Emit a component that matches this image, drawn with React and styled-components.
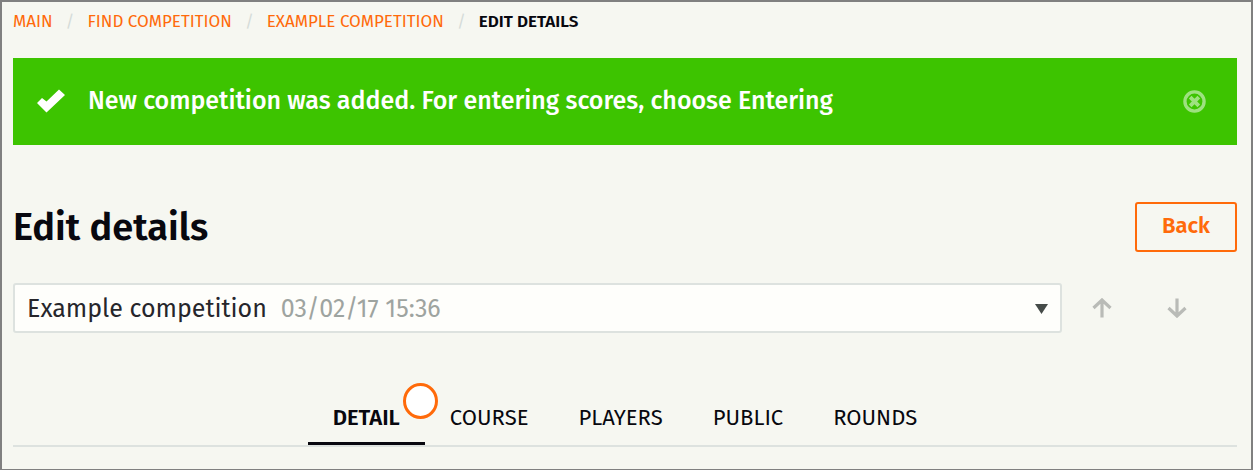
import { useState } from "react";
import styled, { createGlobalStyle, css } from "styled-components";

const GlobalStyles = createGlobalStyle`
  *,
  *::before,
  *::after {
    box-sizing: border-box;
    margin: 0;
    padding: 0;
  }

  body {
    background-color: #f6f7f1;
    color: #08080f;
    font-family: "Fira Sans", "Noto Sans", sans-serif;
  }

  button,
  select {
    font: inherit;
    color: inherit;
    background: none;
    border: none;
    cursor: pointer;
  }
`;

const Page = styled.main`
  min-height: 100vh;
  padding: 8px 14px 22px 11px;
  border: 2px solid #808080;
`;

const Breadcrumbs = styled.ol`
  display: flex;
  list-style: none;
  font-size: 17px;
  line-height: 24px;
  text-transform: uppercase;
`;

const Crumb = styled.li`
  &:not(:last-child)::after {
    content: "/";
    margin: 0 13px;
    color: #d5dcd9;
  }

  a {
    color: #ff6a0a;
    text-decoration: none;
  }

  span {
    font-weight: 600;
  }
`;

const Alert = styled.div`
  display: flex;
  align-items: center;
  margin-top: 24px;
  padding: 27px 31px 28px 24px;
  background-color: #3dc400;
  color: #fff;
`;

const AlertText = styled.p`
  flex: 1;
  margin-left: 23px;
  font-size: 25px;
  font-weight: 500;
  line-height: 32px;
`;

const CloseButton = styled.button`
  display: flex;
  opacity: 0.5;
`;

const Header = styled.header`
  display: flex;
  align-items: center;
  justify-content: space-between;
  margin-top: 57px;
`;

const Title = styled.h1`
  font-size: 38px;
  font-weight: 600;
  line-height: 50px;
`;

const BackButton = styled.button`
  height: 50px;
  padding: 0 25px 4px;
  border: 2px solid #ff6a0a;
  border-radius: 3px;
  color: #ff6a0a;
  font-size: 22px;
  font-weight: 600;
`;

const Picker = styled.div`
  display: flex;
  align-items: center;
  margin-top: 31px;
`;

const Field = styled.label`
  display: flex;
  flex: 1;
  align-items: center;
  height: 50px;
  padding: 2px 12px 0;
  border: 2px solid #dde2df;
  border-radius: 3px;
  background-color: #fefefb;
  color: #26262b;
  font-size: 25px;
`;

const Select = styled.select`
  appearance: none;
  field-sizing: content;
  outline: none;
`;

const PlayedAt = styled.span`
  flex: 1;
  margin-left: 14px;
  color: #9ea4a0;
`;

const StepButton = styled.button`
  display: flex;
  justify-content: center;
  width: 24px;
  margin-left: 28px;
  color: #b9bbb7;

  & + & {
    margin: 0 48px 0 51px;
  }
`;

const Tabs = styled.nav`
  display: flex;
  justify-content: center;
  margin-top: 58px;
  border-bottom: 2px solid #dde2df;
`;

const Tab = styled.button`
  position: relative;
  height: 54px;
  padding: 1px 25px 0;
  border-bottom: 3px solid transparent;
  font-size: 22px;
  text-transform: uppercase;

  ${(props) =>
    props.$active &&
    css`
      border-color: #08080f;
      font-weight: 600;
    `}
`;

const Marker = styled.i`
  position: absolute;
  top: -8px;
  right: -13px;
  width: 35px;
  height: 36px;
  border: 3px solid #ff6a0a;
  border-radius: 50%;
  background-color: #fff;
`;

const tabs = ["Detail", "Course", "Players", "Public", "Rounds"];

function CheckIcon() {
  return (
    <svg width="28" height="24" viewBox="0 0 28 24" fill="#fff">
      <path d="M0 14 5 9 9.500 12.500 22 0.500 28 6 9.500 23.500Z" />
    </svg>
  );
}

function CloseIcon() {
  return (
    <svg width="23" height="23" viewBox="0 0 24 24" fill="none" stroke="#fff">
      <circle cx="12" cy="12" r="10" strokeWidth="3.500" />
      <path d="M7.500 7.500 16.500 16.500M16.500 7.500 7.500 16.500" strokeWidth="4" />
    </svg>
  );
}

function ArrowIcon({ down }) {
  return (
    <svg
      width="20"
      height="20"
      viewBox="0 0 20 20"
      fill="none"
      stroke="currentColor"
      strokeWidth="3.200"
    >
      <path
        d={
          down
            ? "M10 0.500V18M1.500 10 10 18 18.500 10"
            : "M10 19.500V2M1.500 10 10 2 18.500 10"
        }
      />
    </svg>
  );
}

function App() {
  const [activeTab, setActiveTab] = useState("Detail");
  const [showAlert, setShowAlert] = useState(true);

  return (
    <>
      <GlobalStyles />
      <Page>
        <Breadcrumbs>
          <Crumb>
            <a href="#main">Main</a>
          </Crumb>
          <Crumb>
            <a href="#find">Find competition</a>
          </Crumb>
          <Crumb>
            <a href="#example">Example competition</a>
          </Crumb>
          <Crumb>
            <span>Edit details</span>
          </Crumb>
        </Breadcrumbs>

        {showAlert && (
          <Alert role="status">
            <CheckIcon />
            <AlertText>
              New competition was added. For entering scores, choose Entering
            </AlertText>
            <CloseButton aria-label="Close" onClick={() => setShowAlert(false)}>
              <CloseIcon />
            </CloseButton>
          </Alert>
        )}

        <Header>
          <Title>Edit details</Title>
          <BackButton>Back</BackButton>
        </Header>

        <Picker>
          <Field>
            <Select aria-label="Competition">
              <option>Example competition</option>
            </Select>
            <PlayedAt>03/02/17 15:36</PlayedAt>
            <svg width="13" height="10" viewBox="0 0 13 10" fill="#454b48">
              <path d="M0 0H13L6.500 10Z" />
            </svg>
          </Field>
          <StepButton aria-label="Previous competition">
            <ArrowIcon />
          </StepButton>
          <StepButton aria-label="Next competition">
            <ArrowIcon down />
          </StepButton>
        </Picker>

        <Tabs>
          {tabs.map((tab) => (
            <Tab
              key={tab}
              $active={tab === activeTab}
              onClick={() => setActiveTab(tab)}
            >
              {tab}
              {tab === "Detail" && <Marker />}
            </Tab>
          ))}
        </Tabs>
      </Page>
    </>
  );
}

export default App;
